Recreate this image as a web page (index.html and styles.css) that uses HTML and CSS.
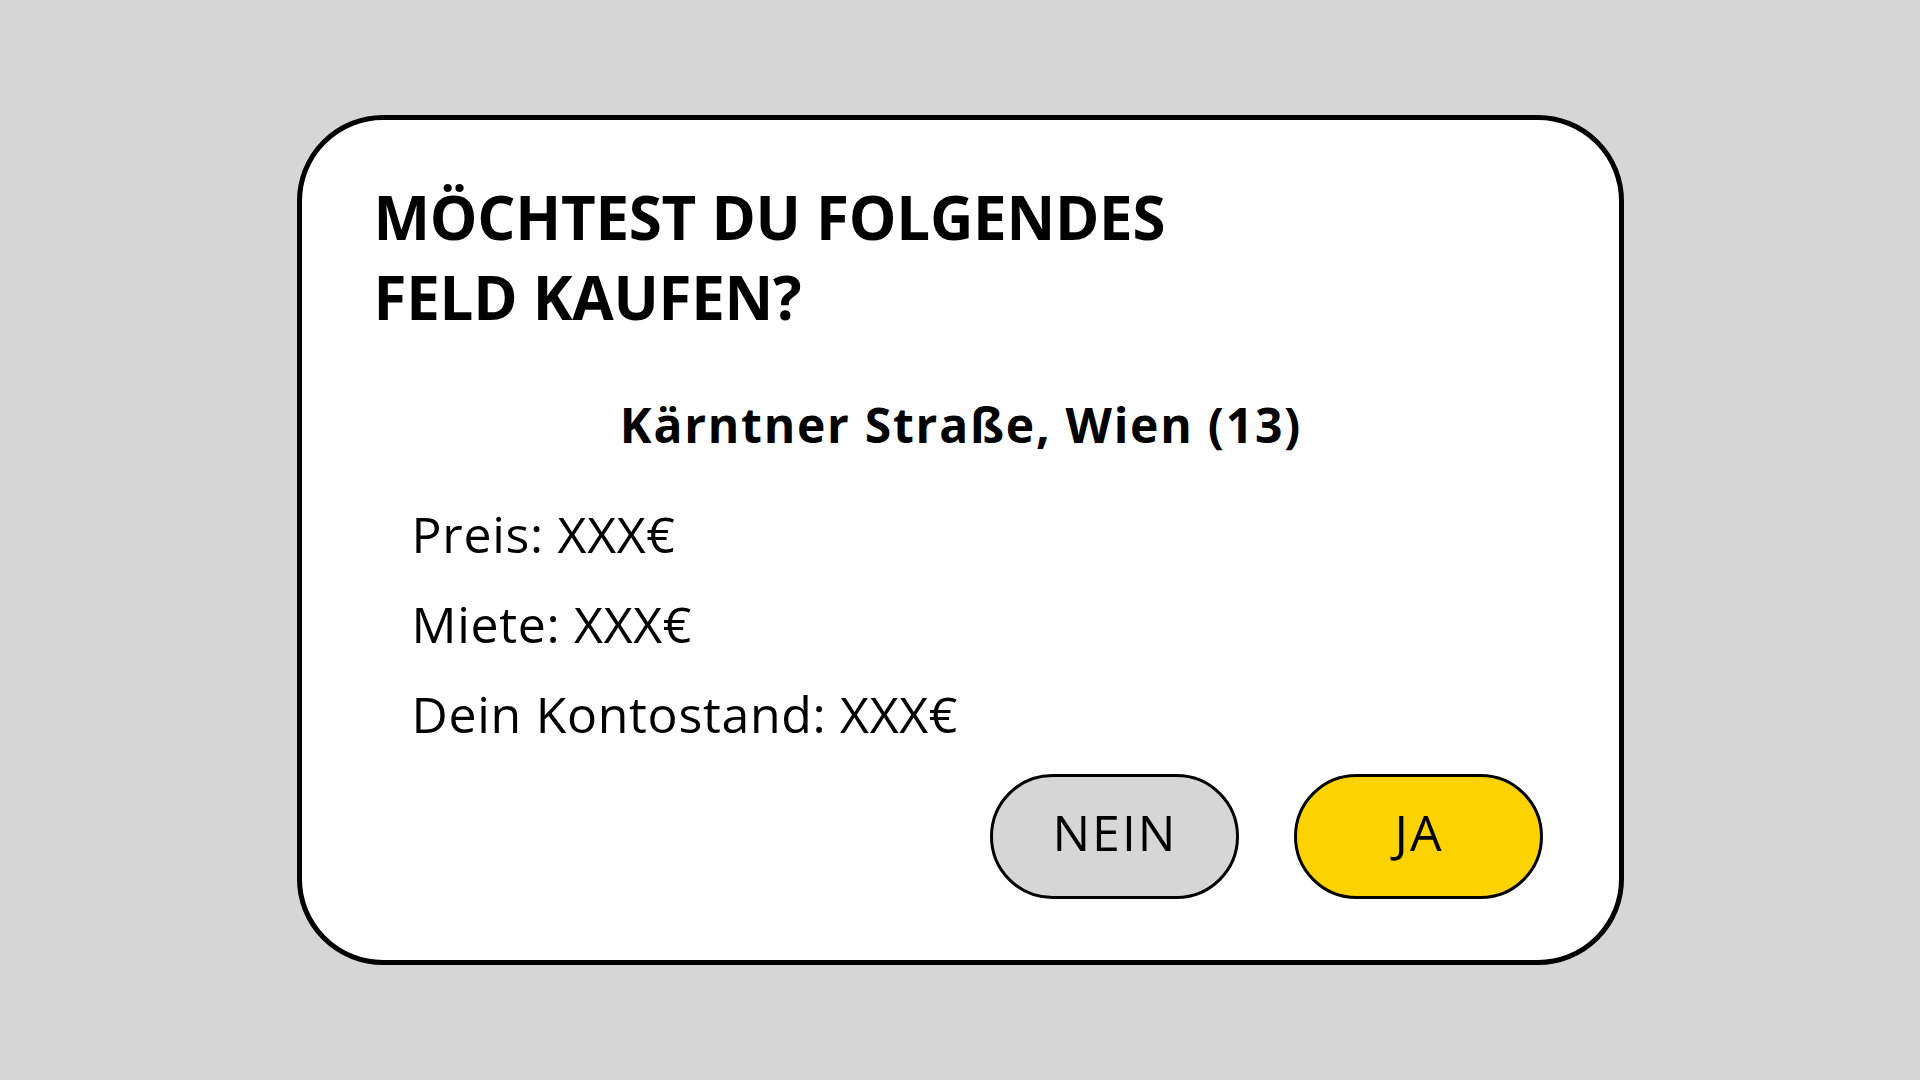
FILE: index.html
```html
<!DOCTYPE html>
<html lang="de">
<head>
<meta charset="utf-8">
<title>Feld kaufen</title>
<link rel="stylesheet" href="styles.css">
</head>
<body>
<main class="stage">
  <section class="dialog">
    <h1 class="dialog-title">MÖCHTEST DU FOLGENDES<br>FELD KAUFEN?</h1>
    <h2 class="field-name">Kärntner Straße, Wien (13)</h2>
    <ul class="details">
      <li>Preis: XXX€</li>
      <li>Miete: XXX€</li>
      <li>Dein Kontostand: XXX€</li>
    </ul>
    <div class="actions">
      <button class="btn btn-no">NEIN</button>
      <button class="btn btn-yes">JA</button>
    </div>
  </section>
</main>
</body>
</html>
```
FILE: styles.css
```css
html, body {
  margin: 0;
  padding: 0;
}
body {
  background: #d6d6d6;
  font-family: "Open Sans", "Noto Sans", sans-serif;
  color: #000;
}
.stage {
  height: 100vh;
  display: flex;
  align-items: center;
  justify-content: center;
}
.dialog {
  box-sizing: border-box;
  width: 1327px;
  background: #fff;
  border: 5px solid #000;
  border-radius: 86px;
  padding: 57px 76px 61px 72px;
  display: flex;
  flex-direction: column;
}
.dialog-title {
  margin: 0;
  font-size: 60px;
  font-weight: 700;
  line-height: 80px;
  letter-spacing: -0.25px;
}
.field-name {
  margin: 58px 0 0 6px;
  font-size: 48px;
  font-weight: 700;
  line-height: 60px;
  letter-spacing: 1.75px;
  text-align: center;
}
.details {
  list-style: none;
  margin: 34px 0 0 0;
  padding: 0 0 0 38px;
  font-size: 50px;
  line-height: 90px;
  letter-spacing: 0.7px;
}
.actions {
  margin-top: 15px;
  display: flex;
  justify-content: flex-end;
  gap: 55px;
}
.btn {
  box-sizing: border-box;
  width: 249px;
  height: 125px;
  border: 3px solid #000;
  border-radius: 63px;
  font-family: "Open Sans", "Noto Sans", sans-serif;
  font-size: 50px;
  letter-spacing: 2px;
  color: #000;
  display: flex;
  align-items: center;
  justify-content: center;
  padding: 0 0 10px 2px;
  cursor: pointer;
}
.btn-no {
  background: #d6d6d6;
}
.btn-yes {
  background: #fcd300;
}
```
